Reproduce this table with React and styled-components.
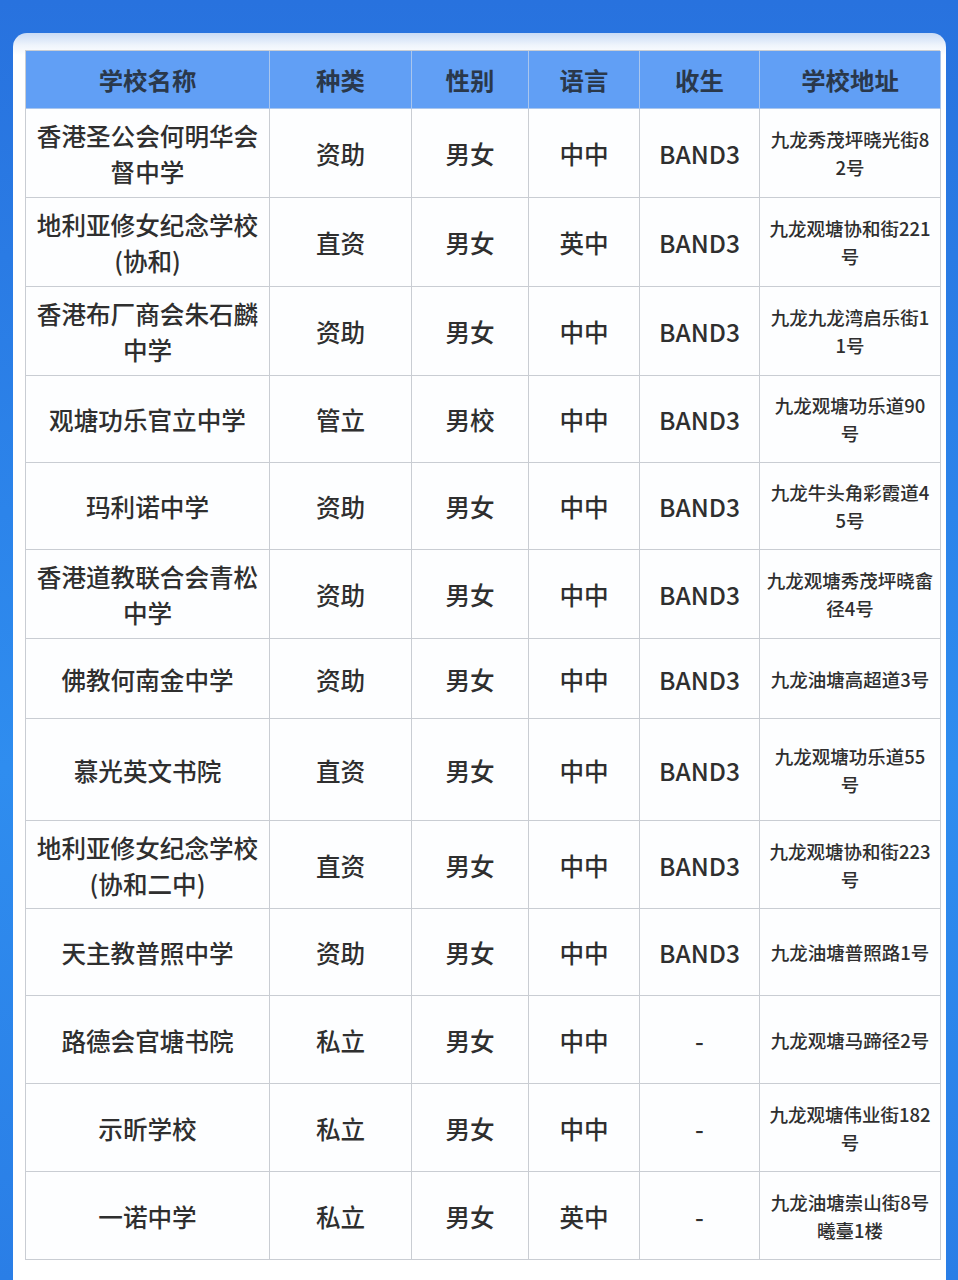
import React from 'react';
import styled, { createGlobalStyle } from 'styled-components';

const GlobalStyle = createGlobalStyle`
  html, body {
    margin: 0;
    padding: 0;
  }
  body {
    font-family: "Noto Sans CJK SC", "Noto Sans", sans-serif;
    background: #2a78e0;
  }
`;

const COLUMNS = ['学校名称', '种类', '性别', '语言', '收生', '学校地址'];

const ROWS = [
  { h: 89, name: '香港圣公会何明华会\n督中学', type: '资助', sex: '男女', lang: '中中', band: 'BAND3', addr: '九龙秀茂坪晓光街8\n2号' },
  { h: 89, name: '地利亚修女纪念学校\n(协和)', type: '直资', sex: '男女', lang: '英中', band: 'BAND3', addr: '九龙观塘协和街221\n号' },
  { h: 89, name: '香港布厂商会朱石麟\n中学', type: '资助', sex: '男女', lang: '中中', band: 'BAND3', addr: '九龙九龙湾启乐街1\n1号' },
  { h: 87, name: '观塘功乐官立中学', type: '管立', sex: '男校', lang: '中中', band: 'BAND3', addr: '九龙观塘功乐道90\n号' },
  { h: 87, name: '玛利诺中学', type: '资助', sex: '男女', lang: '中中', band: 'BAND3', addr: '九龙牛头角彩霞道4\n5号' },
  { h: 89, name: '香港道教联合会青松\n中学', type: '资助', sex: '男女', lang: '中中', band: 'BAND3', addr: '九龙观塘秀茂坪晓畲\n径4号' },
  { h: 80, name: '佛教何南金中学', type: '资助', sex: '男女', lang: '中中', band: 'BAND3', addr: '九龙油塘高超道3号' },
  { h: 102, name: '慕光英文书院', type: '直资', sex: '男女', lang: '中中', band: 'BAND3', addr: '九龙观塘功乐道55\n号' },
  { h: 88, name: '地利亚修女纪念学校\n(协和二中)', type: '直资', sex: '男女', lang: '中中', band: 'BAND3', addr: '九龙观塘协和街223\n号' },
  { h: 87, name: '天主教普照中学', type: '资助', sex: '男女', lang: '中中', band: 'BAND3', addr: '九龙油塘普照路1号' },
  { h: 88, name: '路德会官塘书院', type: '私立', sex: '男女', lang: '中中', band: '-', addr: '九龙观塘马蹄径2号' },
  { h: 88, name: '示昕学校', type: '私立', sex: '男女', lang: '中中', band: '-', addr: '九龙观塘伟业街182\n号' },
  { h: 88, name: '一诺中学', type: '私立', sex: '男女', lang: '英中', band: '-', addr: '九龙油塘崇山街8号\n曦臺1楼' },
];

const Page = styled.div`
  height: 1280px;
  overflow: hidden;
  background: linear-gradient(180deg, #2872de 0%, #2c84ea 40%, #2f8def 60%, #2a7ee6 100%);
  padding-top: 33px;
  box-sizing: border-box;
`;

const Card = styled.div`
  margin: 0 12px 0 13px;
  min-height: 1300px;
  border-radius: 14px 14px 0 0;
  background: linear-gradient(180deg, #c9dbf5 0px, #eef4fc 12px, #ffffff 22px);
  padding: 17px 6px 0 12px;
  box-sizing: border-box;
`;

const Table = styled.div`
  display: grid;
  grid-template-columns: 244px 142px 117px 111px 120px 181px;
  border-top: 1px solid #c9cdd3;
  border-left: 1px solid #c9cdd3;
  background: #fdfeff;
`;

const Cell = styled.div`
  height: ${(p) => p.$h}px;
  box-sizing: border-box;
  border-right: 1px solid #c9cdd3;
  border-bottom: 1px solid #c9cdd3;
  display: flex;
  align-items: center;
  justify-content: center;
  text-align: center;
  white-space: pre-line;
  color: #2f2f2f;
  font-size: 24.6px;
  font-weight: 500;
  line-height: 36px;
  padding: 0 4px;
`;

const HeadCell = styled(Cell)`
  background: #619ff5;
  color: #2a384b;
  font-size: 24.4px;
  font-weight: 700;
  border-bottom-color: #a9c6ee;
  border-right-color: #a9c6ee;
`;

const AddrCell = styled(Cell)`
  font-size: 18.5px;
  line-height: 28px;
  padding: 0 2px;
`;

export default function App() {
  return (
    <Page>
      <GlobalStyle />
      <Card>
        <Table>
          {COLUMNS.map((c) => (
            <HeadCell key={c} $h={58}>{c}</HeadCell>
          ))}
          {ROWS.map((r, i) => (
            <React.Fragment key={i}>
              <Cell $h={r.h}>{r.name}</Cell>
              <Cell $h={r.h}>{r.type}</Cell>
              <Cell $h={r.h}>{r.sex}</Cell>
              <Cell $h={r.h}>{r.lang}</Cell>
              <Cell $h={r.h}>{r.band}</Cell>
              <AddrCell $h={r.h}>{r.addr}</AddrCell>
            </React.Fragment>
          ))}
        </Table>
      </Card>
    </Page>
  );
}
